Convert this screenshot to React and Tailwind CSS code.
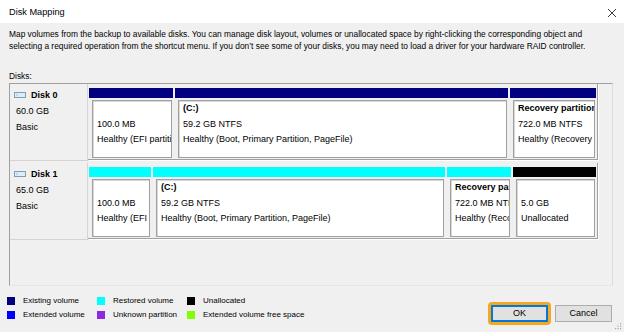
import React from "react";

const navy = "bg-[#000080]";

function DiskIcon() {
  return (
    <svg width="12" height="6" viewBox="0 0 12 6" className="shrink-0">
      <rect x="0.5" y="0.5" width="11" height="5" fill="#dcecf8" stroke="#7f9db9" />
      <line x1="2" y1="3" x2="4" y2="3" stroke="#9fc0dc" />
    </svg>
  );
}

function Part({ w, bar, lines, title }) {
  return (
    <div className="flex flex-col shrink-0" style={{ width: w }}>
      <div className={`h-[10px] ${bar}`} />
      <div className="mt-[2px] ml-[3px] mr-[1px] h-[58px] bg-white border border-[#a0a0a0] shadow-[inset_1px_1px_0_#d8d8d8] overflow-hidden pl-[4px] text-[9px] leading-[15.5px] whitespace-nowrap">
        <div className="font-bold overflow-hidden">{title || "\u00a0"}</div>
        {lines.map((l, i) => (
          <div key={i} className="overflow-hidden">{l}</div>
        ))}
      </div>
    </div>
  );
}

function DiskRow({ name, size, parts }) {
  return (
    <div className="flex h-[79px] items-start">
      <div className="w-[78px] h-[77px] border-r border-b border-[#d4d4d4] pl-[4px] pt-[3px] text-[9px] leading-[16px]">
        <div className="flex items-center gap-[5px] font-bold">
          <DiskIcon />
          <span>{name}</span>
        </div>
        <div className="ml-[2px]">{size}</div>
        <div className="ml-[2px]">Basic</div>
      </div>
      <div className="w-[510px] h-[76px] pt-[4px] pl-[1px] pr-[1px] border-r border-b border-[#a0a0a0] shadow-[1px_1px_0_#ffffff] flex gap-[2px]">
        {parts.map((p, i) => (
          <Part key={i} {...p} />
        ))}
      </div>
    </div>
  );
}

function Legend({ color, label }) {
  return (
    <div className="flex items-center gap-[8px] whitespace-nowrap">
      <span className={`w-[8px] h-[8px] ${color}`} />
      <span>{label}</span>
    </div>
  );
}

export default function App() {
  return (
    <div className="w-[624px] h-[332px] bg-[#f0f0f0] flex flex-col font-['Liberation_Sans',Arial,sans-serif] text-black relative overflow-hidden">
      <div className="h-[23px] bg-white flex items-center justify-between pl-[9px] pr-[8px] shrink-0">
        <span className="text-[9.2px] pt-[2px]">Disk Mapping</span>
        <svg width="8" height="8" viewBox="0 0 8 8" className="mt-[2px]">
          <line x1="0" y1="0" x2="8" y2="8" stroke="#222" strokeWidth="0.9" />
          <line x1="8" y1="0" x2="0" y2="8" stroke="#222" strokeWidth="0.9" />
        </svg>
      </div>
      <div className="px-[9px] pt-[5px] text-[8.4px] leading-[12px] whitespace-nowrap">
        <div>
          Map volumes from the backup to available disks. You can manage disk layout, volumes or unallocated space by right-clicking the corresponding object and
        </div>
        <div>
          selecting a required operation from the shortcut menu. If you don’t see some of your disks, you may need to load a driver for your hardware RAID controller.
        </div>
      </div>
      <div className="px-[9px] mt-[18px] text-[8.4px] leading-[12px]">Disks:</div>
      <div className="ml-[9px] mt-[1px] w-[604px] h-[203px] border border-t-[#a0a0a0] border-l-[#a0a0a0] border-r-[#dcdcdc] border-b-[#e6e6e6] shrink-0">
        <DiskRow
          name="Disk 0"
          size="60.0 GB"
          parts={[
            { w: 84, bar: navy, lines: ["100.0 MB", "Healthy (EFI partition)"] },
            {
              w: 333,
              bar: navy,
              title: "(C:)",
              lines: ["59.2 GB NTFS", "Healthy (Boot, Primary Partition, PageFile)"],
            },
            {
              w: 86,
              bar: navy,
              title: "Recovery partition",
              lines: ["722.0 MB NTFS", "Healthy (Recovery Partition)"],
            },
          ]}
        />
        <DiskRow
          name="Disk 1"
          size="65.0 GB"
          parts={[
            { w: 62, bar: "bg-[#00ffff]", lines: ["100.0 MB", "Healthy (EFI partition)"] },
            {
              w: 292,
              bar: "bg-[#00ffff]",
              title: "(C:)",
              lines: ["59.2 GB NTFS", "Healthy (Boot, Primary Partition, PageFile)"],
            },
            {
              w: 64,
              bar: "bg-[#00ffff]",
              title: "Recovery partition",
              lines: ["722.0 MB NTFS", "Healthy (Recovery Partition)"],
            },
            { w: 83, bar: "bg-black", lines: ["5.0 GB", "Unallocated"] },
          ]}
        />
      </div>
      <div className="flex justify-between items-start">
        <div className="pl-[7px] pt-[8px] grid grid-cols-[90px_90px_auto] text-[8px] leading-[14px]">
          <Legend color="bg-[#000080]" label="Existing volume" />
          <Legend color="bg-[#00ffff]" label="Restored volume" />
          <Legend color="bg-black" label="Unallocated" />
          <Legend color="bg-[#0000ff]" label="Extended volume" />
          <Legend color="bg-[#8a2be2]" label="Unknown partition" />
          <Legend color="bg-[#80ff00]" label="Extended volume free space" />
        </div>
        <div className="pt-[16px] pr-[12px] flex items-center">
          <div className="w-[63px] h-[23px] border-[3px] border-[#f5a623] rounded-[4px]">
            <div className="w-full h-full border-2 border-[#0078d7] bg-[#e1e1e1] flex items-center justify-center text-[9px]">
              OK
            </div>
          </div>
          <div className="ml-[4px] w-[57px] h-[17px] border border-[#adadad] bg-[#e1e1e1] flex items-center justify-center text-[9px]">
            Cancel
          </div>
        </div>
      </div>
      <svg width="7" height="7" viewBox="0 0 7 7" className="absolute right-[2px] bottom-[2px]">
        <rect x="5" y="0" width="1.2" height="1.2" fill="#a8a8a8" />
        <rect x="2.5" y="2.5" width="1.2" height="1.2" fill="#a8a8a8" />
        <rect x="5" y="2.5" width="1.2" height="1.2" fill="#a8a8a8" />
        <rect x="0" y="5" width="1.2" height="1.2" fill="#a8a8a8" />
        <rect x="2.5" y="5" width="1.2" height="1.2" fill="#a8a8a8" />
        <rect x="5" y="5" width="1.2" height="1.2" fill="#a8a8a8" />
      </svg>
    </div>
  );
}
